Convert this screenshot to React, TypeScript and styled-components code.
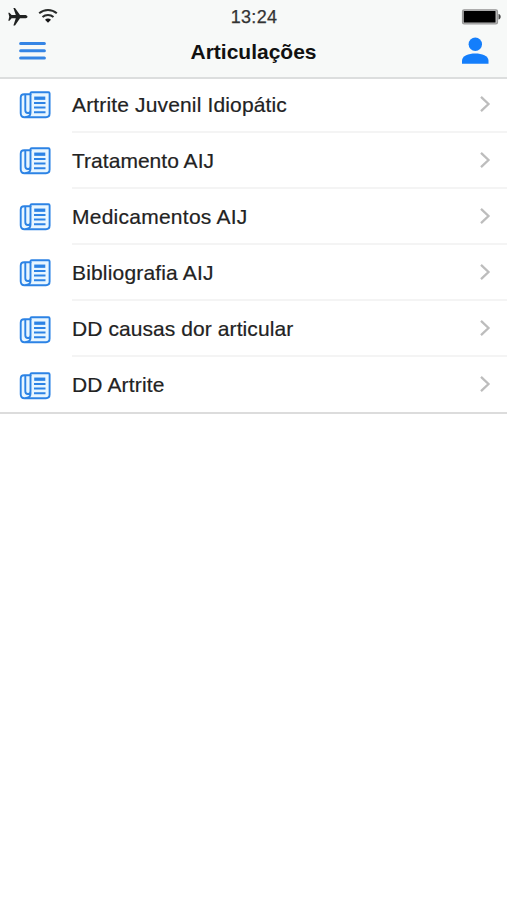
import React from "react";
import styled, { createGlobalStyle } from "styled-components";

const GlobalStyle = createGlobalStyle`
  * { box-sizing: border-box; }
  body {
    margin: 0;
    background: #fff;
    font-family: "Liberation Sans", Arial, sans-serif;
  }
`;

const Screen = styled.div`
  min-height: 900px;
  background: #fff;
  overflow: hidden;
`;

const Header = styled.header`
  height: 79px;
  background: #f7f9f8;
  border-bottom: 2px solid #dcdede;
`;

const StatusBar = styled.div`
  height: 32px;
  display: grid;
  grid-template-columns: 1fr auto 1fr;
  padding: 0 6px 0 7px;
`;

const StatusGroup = styled.div<{ $end?: boolean }>`
  display: flex;
  gap: 10px;
  padding-top: 7px;
  justify-content: ${(p) => (p.$end ? "flex-end" : "flex-start")};
`;

const Clock = styled.time`
  padding-top: 7px;
  font-size: 18px;
  line-height: 21px;
  letter-spacing: 0.3px;
  color: #333;
  -webkit-text-stroke: 0.25px #333;
`;

const NavBar = styled.nav`
  height: 44px;
  display: grid;
  grid-template-columns: 60px 1fr 60px;
`;

const NavButton = styled.button<{ $end?: boolean }>`
  border: 0;
  padding: ${(p) => (p.$end ? "5px 18px 0 0" : "9px 0 0 19px")};
  background: none;
  display: flex;
  justify-content: ${(p) => (p.$end ? "flex-end" : "flex-start")};
`;

const Title = styled.h1`
  margin: 0;
  padding-top: 8px;
  text-align: center;
  font-size: 21px;
  line-height: 24px;
  color: #111;
`;

const List = styled.ul`
  margin: 0;
  padding: 0;
  list-style: none;
  border-bottom: 2px solid #dcdcdc;
`;

const Row = styled.li`
  height: 56.1px;
  padding-left: 19px;
  display: flex;
  gap: 21px;

  &:first-child { height: 54px; }
  &:first-child > span,
  &:first-child > div > span { margin-top: -2px; }
  &:last-child { height: 55px; }
  &:last-child > div { border-bottom-color: transparent; }
`;

const IconBox = styled.span`
  width: 32px;
  padding-top: 14.3px;
  flex: none;
`;

const RowBody = styled.div`
  flex: 1;
  display: flex;
  justify-content: space-between;
  padding-right: 16px;
  border-bottom: 2px solid #f4f4f4;
`;

const Label = styled.span<{ $spacing: number }>`
  padding-top: 16px;
  font-size: 21px;
  line-height: 24px;
  letter-spacing: ${(p) => p.$spacing}px;
  color: #222;
  -webkit-text-stroke: 0.2px #222;
  white-space: nowrap;
`;

const ChevronBox = styled.span`
  padding-top: 17.5px;
`;

const Airplane = () => (
  <svg width="21" height="20" viewBox="0 0 21 20">
    <path
      d="M20.5 9.7C20.5 8.6 19 8.1 17.7 8.1H13L8 1H6.4L8.8 8.1H4.6L2.5 5.7H1.3L2.3 9.7L1.3 13.7H2.5L4.6 11.3H8.8L6.4 18.4H8L13 11.3H17.7C19 11.3 20.5 10.8 20.5 9.7Z"
      fill="#202221"
    />
  </svg>
);

const Wifi = () => (
  <svg width="20" height="18" viewBox="0 0 20 18">
    <g fill="none" stroke="#292b2a" strokeWidth="2">
      <path d="M1.2 6.3C6.2 1.9 13.8 1.9 18.8 6.3" />
      <path d="M4.5 10C7.6 7.2 12.4 7.2 15.5 10" />
    </g>
    <path d="M7 12.7C8.7 11.2 11.3 11.2 13 12.7L10 15.8Z" fill="#151515" />
  </svg>
);

const Battery = () => (
  <svg width="40" height="20" viewBox="0 0 40 20">
    <rect x="1.5" y="2.8" width="35" height="14" rx="1.6" fill="#bbb" stroke="#999" strokeWidth="1.2" />
    <rect x="2.8" y="4" width="31.7" height="11.5" rx="0.6" fill="#000" />
    <path d="M37.5 7C40.4 7.5 40.4 12 37.5 12.5Z" fill="#444" />
  </svg>
);

const Menu = () => (
  <svg width="27" height="20" viewBox="0 0 27 20">
    <path d="M1.6 2.5H25.4M1.6 9.8H25.4M1.6 17H25.4" stroke="#3585e5" strokeWidth="3" strokeLinecap="round" />
  </svg>
);

const Person = () => (
  <svg width="28" height="28" viewBox="0 0 28 28">
    <circle cx="14.3" cy="7.3" r="6.7" fill="#147efb" />
    <path d="M1 26.7V23.8C1 14.2 27.5 14.2 27.5 23.8V26.7Z" fill="#147efb" />
  </svg>
);

const Newspaper = () => (
  <svg width="32" height="28" viewBox="0 0 32 28" fill="none" stroke="#2c83e5" strokeWidth="1.9" strokeLinejoin="round">
    <path d="M12.7 1.2H29.4Q30.6 1.2 30.6 2.4V22.5Q30.6 26.2 27 26.2H5.5Q1.7 26.2 1.7 22.3V6.7Q1.7 3.3 5.2 3.3H11.5V2.4Q11.5 1.2 12.7 1.2Z" fill="#e8f6ff" />
    <path d="M6.3 4V19.3Q6.3 22 8.8 22Q11.5 22 11.5 19.2V3M11.5 19.5V21.8Q11.5 26 6.2 26.1" />
    <path d="M15.2 7.2H26.3" strokeWidth="3.3" />
    <path d="M15 12H26.5M15 16.5H26.5M15 21.3H26.5" />
  </svg>
);

const Chevron = () => (
  <svg width="12" height="18" viewBox="0 0 12 18">
    <path d="M2 1.8L9.5 9L2 16.2" fill="none" stroke="#bdbdbd" strokeWidth="2.3" />
  </svg>
);

const items = [
  { label: "Artrite Juvenil Idiopátic", spacing: 0.15 },
  { label: "Tratamento AIJ", spacing: 0.03 },
  { label: "Medicamentos AIJ", spacing: 0.25 },
  { label: "Bibliografia AIJ", spacing: 0.17 },
  { label: "DD causas dor articular", spacing: 0.08 },
  { label: "DD Artrite", spacing: 0.15 },
];

export default function App() {
  return (
    <Screen>
      <GlobalStyle />
      <Header>
        <StatusBar>
          <StatusGroup>
            <Airplane />
            <Wifi />
          </StatusGroup>
          <Clock>13:24</Clock>
          <StatusGroup $end>
            <Battery />
          </StatusGroup>
        </StatusBar>
        <NavBar>
          <NavButton aria-label="Menu">
            <Menu />
          </NavButton>
          <Title>Articulações</Title>
          <NavButton $end aria-label="Perfil">
            <Person />
          </NavButton>
        </NavBar>
      </Header>
      <List>
        {items.map((item) => (
          <Row key={item.label}>
            <IconBox>
              <Newspaper />
            </IconBox>
            <RowBody>
              <Label $spacing={item.spacing}>{item.label}</Label>
              <ChevronBox>
                <Chevron />
              </ChevronBox>
            </RowBody>
          </Row>
        ))}
      </List>
    </Screen>
  );
}
